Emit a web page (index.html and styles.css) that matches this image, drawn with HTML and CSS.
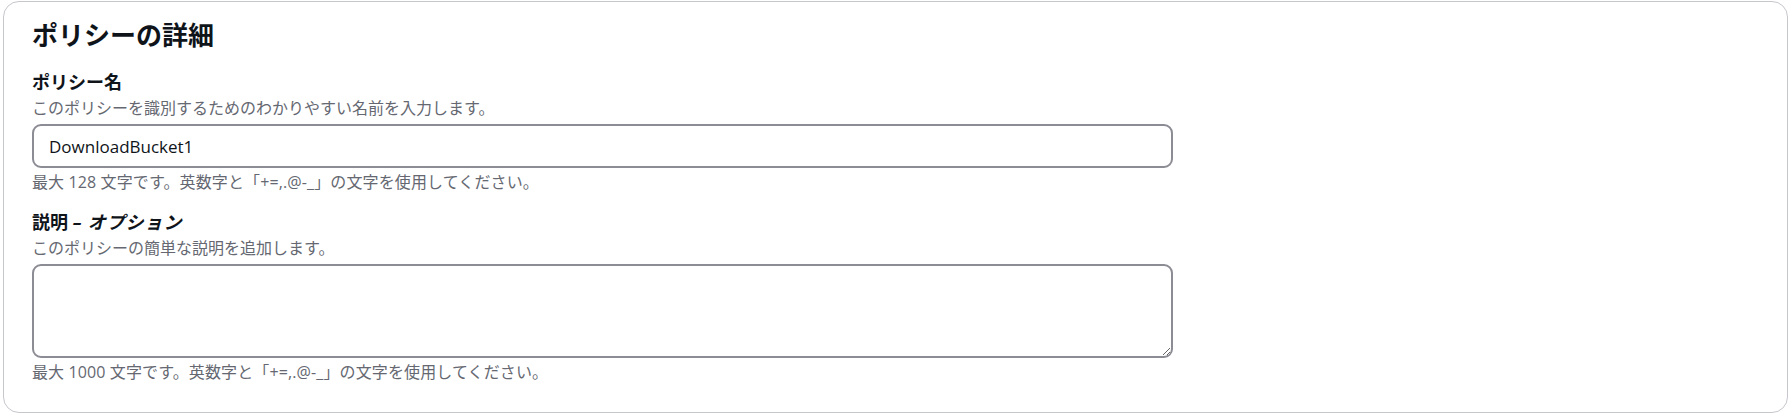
FILE: index.html
```html
<!DOCTYPE html>
<html lang="ja">
<head>
<meta charset="utf-8">
<title>ポリシーの詳細</title>
<link rel="stylesheet" href="styles.css">
</head>
<body>
<div class="page">
  <section class="card">
    <h2 class="card-title">ポリシーの詳細</h2>
    <div class="field">
      <label class="field-label" for="policy-name">ポリシー名</label>
      <div class="field-desc">このポリシーを識別するためのわかりやすい名前を入力します。</div>
      <input class="text-input" id="policy-name" type="text" value="DownloadBucket1">
      <div class="field-constraint">最大 128 文字です。英数字と「+=,.@-_」の文字を使用してください。</div>
    </div>
    <div class="field field-second">
      <label class="field-label" for="policy-desc">説明 <span class="optional">– オプション</span></label>
      <div class="field-desc">このポリシーの簡単な説明を追加します。</div>
      <textarea class="text-area" id="policy-desc"></textarea>
      <div class="field-constraint">最大 1000 文字です。英数字と「+=,.@-_」の文字を使用してください。</div>
    </div>
  </section>
</div>
</body>
</html>
```

FILE: styles.css
```css
* { box-sizing: border-box; }
html, body {
  margin: 0;
  padding: 0;
  background: #ffffff;
}
body {
  font-family: "Open Sans", "Noto Sans CJK JP", sans-serif;
  color: #000716;
}
.page {
  padding: 1px 2px 2px 3px;
}
.card {
  border: 1px solid #c6c6cd;
  border-radius: 16px;
  padding: 16px 28px 28px 28px;
  height: 412px;
  display: flex;
  flex-direction: column;
}
.card-title {
  margin: 0;
  font-size: 26px;
  line-height: 32px;
  font-weight: 700;
  font-family: "Noto Sans CJK JP", sans-serif;
  color: #0f141a;
}
.field {
  margin-top: 20px;
  width: 1141px;
  display: flex;
  flex-direction: column;
}
.field-second {
  margin-top: 17px;
}
.field-label {
  font-family: "Open Sans", "Noto Sans CJK JP", sans-serif;
  font-size: 18px;
  line-height: 24px;
  font-weight: 700;
  color: #0f141a;
}
.optional {
  font-style: italic;
  letter-spacing: 0.9px;
}
.field-desc {
  margin-top: 2px;
  font-family: "Noto Sans CJK JP", sans-serif;
  font-size: 16px;
  line-height: 22px;
  color: #656871;
}
.text-input {
  margin-top: 6px;
  height: 44px;
  width: 100%;
  border: 2px solid #8c8c94;
  border-radius: 9px;
  padding: 0 15px;
  font-family: "Open Sans", sans-serif;
  font-size: 17px;
  color: #0f141a;
  background: #ffffff;
  outline: none;
}
.text-area {
  margin-top: 6px;
  height: 94px;
  width: 100%;
  border: 2px solid #8c8c94;
  border-radius: 9px;
  padding: 8px 15px;
  font-family: "Open Sans", sans-serif;
  font-size: 17px;
  background: #ffffff;
  resize: vertical;
  outline: none;
}
.field-constraint {
  margin-top: 3px;
  font-family: "Open Sans", "Noto Sans CJK JP", sans-serif;
  font-size: 16px;
  line-height: 22px;
  letter-spacing: 0.12px;
  color: #656871;
}
```
